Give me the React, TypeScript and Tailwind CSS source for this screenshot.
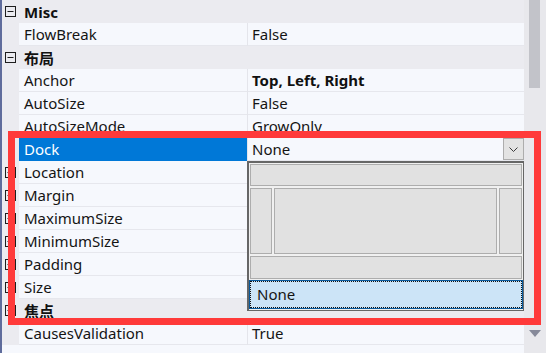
import React from 'react';

const FONT = { fontFamily: '"Segoe UI", "Noto Sans", "Noto Sans CJK SC", sans-serif' };

function Box({ open }: { open: boolean }) {
  return (
    <svg width="11" height="11" viewBox="0 0 11 11" className="ml-[3px]">
      <rect x="0.5" y="0.5" width="10" height="10" fill="none" stroke="#1e1e1e" />
      <line x1="2.5" y1="5.5" x2="8.5" y2="5.5" stroke="#1e1e1e" />
      {!open && <line x1="5.5" y1="2.5" x2="5.5" y2="8.5" stroke="#1e1e1e" />}
    </svg>
  );
}

function Category({ label }: { label: string }) {
  return (
    <div className="flex h-[23px] items-center bg-[#ebebf0]">
      <div className="flex w-[17px] items-center">
        <Box open />
      </div>
      <div className="pl-[5px] text-[15px] font-bold leading-[22px] text-[#111]">{label}</div>
    </div>
  );
}

type PropProps = {
  name: string;
  value?: string;
  bold?: boolean;
  expand?: boolean;
  selected?: boolean;
  dropdown?: boolean;
};

function Prop({ name, value, bold, expand, selected, dropdown }: PropProps) {
  return (
    <div className="flex h-[23px]">
      <div className="flex w-[17px] items-center bg-[#ebebf0]">{expand && <Box open={false} />}</div>
      <div
        className={
          selected
            ? 'w-[228px] border-b border-[#0078d7] bg-[#0078d7] pl-[5px] text-[15px] leading-[22px] text-white'
            : 'w-[228px] border-b border-[#e6e7ed] bg-[#f6f8fd] pl-[5px] text-[15px] leading-[22px] text-[#141414]'
        }
      >
        {name}
      </div>
      <div className="w-px bg-[#e4e5eb]" />
      <div className="flex flex-1 border-b border-[#e6e7ed] bg-[#f6f8fd]">
        <div
          className={
            bold
              ? 'flex-1 pl-[4px] text-[15px] font-bold leading-[22px] text-[#111]'
              : 'flex-1 pl-[4px] text-[15px] leading-[22px] text-[#141414]'
          }
        >
          {value}
        </div>
        {dropdown && (
          <div className="flex h-[22px] w-[21px] items-center justify-center border border-[#adadad] bg-[#e3e3e3]">
            <svg width="9" height="5" viewBox="0 0 9 5">
              <polyline points="0.5,0.5 4.5,4.5 8.5,0.5" fill="none" stroke="#3c3c3c" />
            </svg>
          </div>
        )}
      </div>
    </div>
  );
}

function DockPopup() {
  return (
    <div className="absolute left-[247px] top-[161px] flex h-[150px] w-[277px] flex-col border-b border-l-2 border-r border-t-2 border-[#666] bg-[#f0f0f0]">
      <div className="mx-px mt-px h-[22px] border border-[#adadad] bg-[#e1e1e1]" />
      <div className="mx-px mt-[2px] flex h-[66px] gap-[2px]">
        <div className="w-[22px] border border-[#adadad] bg-[#e1e1e1]" />
        <div className="flex-1 border border-[#adadad] bg-[#e1e1e1]" />
        <div className="w-[23px] border border-[#adadad] bg-[#e1e1e1]" />
      </div>
      <div className="mx-px mt-[2px] h-[23px] border border-[#adadad] bg-[#e1e1e1]" />
      <div className="mt-px h-[29px] border border-[#0a5a9c] bg-[#cce4f7]">
        <div className="h-full border border-dotted border-[#111] pl-[6px] text-[15px] leading-[25px] text-[#141414]">
          None
        </div>
      </div>
    </div>
  );
}

export default function App() {
  return (
    <div className="relative flex h-[353px] w-[546px] overflow-hidden bg-[#f6f8fd]" style={FONT}>
      <div className="w-[2px] bg-[#5f6c9c]" />
      <div className="flex w-[522px] flex-col">
        <Category label="Misc" />
        <Prop name="FlowBreak" value="False" />
        <Category label="布局" />
        <Prop name="Anchor" value="Top, Left, Right" bold />
        <Prop name="AutoSize" value="False" />
        <Prop name="AutoSizeMode" value="GrowOnly" />
        <Prop name="Dock" value="None" selected dropdown />
        <Prop name="Location" value="" expand />
        <Prop name="Margin" value="" expand />
        <Prop name="MaximumSize" value="" expand />
        <Prop name="MinimumSize" value="" expand />
        <Prop name="Padding" value="" expand />
        <Prop name="Size" value="" expand />
        <Category label="焦点" />
        <Prop name="CausesValidation" value="True" />
        <div className="flex-1 bg-[#f6f8fd]" />
      </div>
      <div className="flex w-[22px] flex-col bg-[#e8e8ec]">
        <div className="ml-[5px] h-[88px] w-[11px] bg-[#c2c3c9]" />
        <div className="flex-1" />
        <div className="mb-[16px] flex justify-center">
          <svg width="12" height="7" viewBox="0 0 12 7">
            <polygon points="0,0 12,0 6,7" fill="#868999" />
          </svg>
        </div>
      </div>

      <DockPopup />

      <div className="pointer-events-none absolute left-[8px] top-[131px] h-[194px] w-[533px] border-[7px] border-[#ff3a3a]" />
    </div>
  );
}
